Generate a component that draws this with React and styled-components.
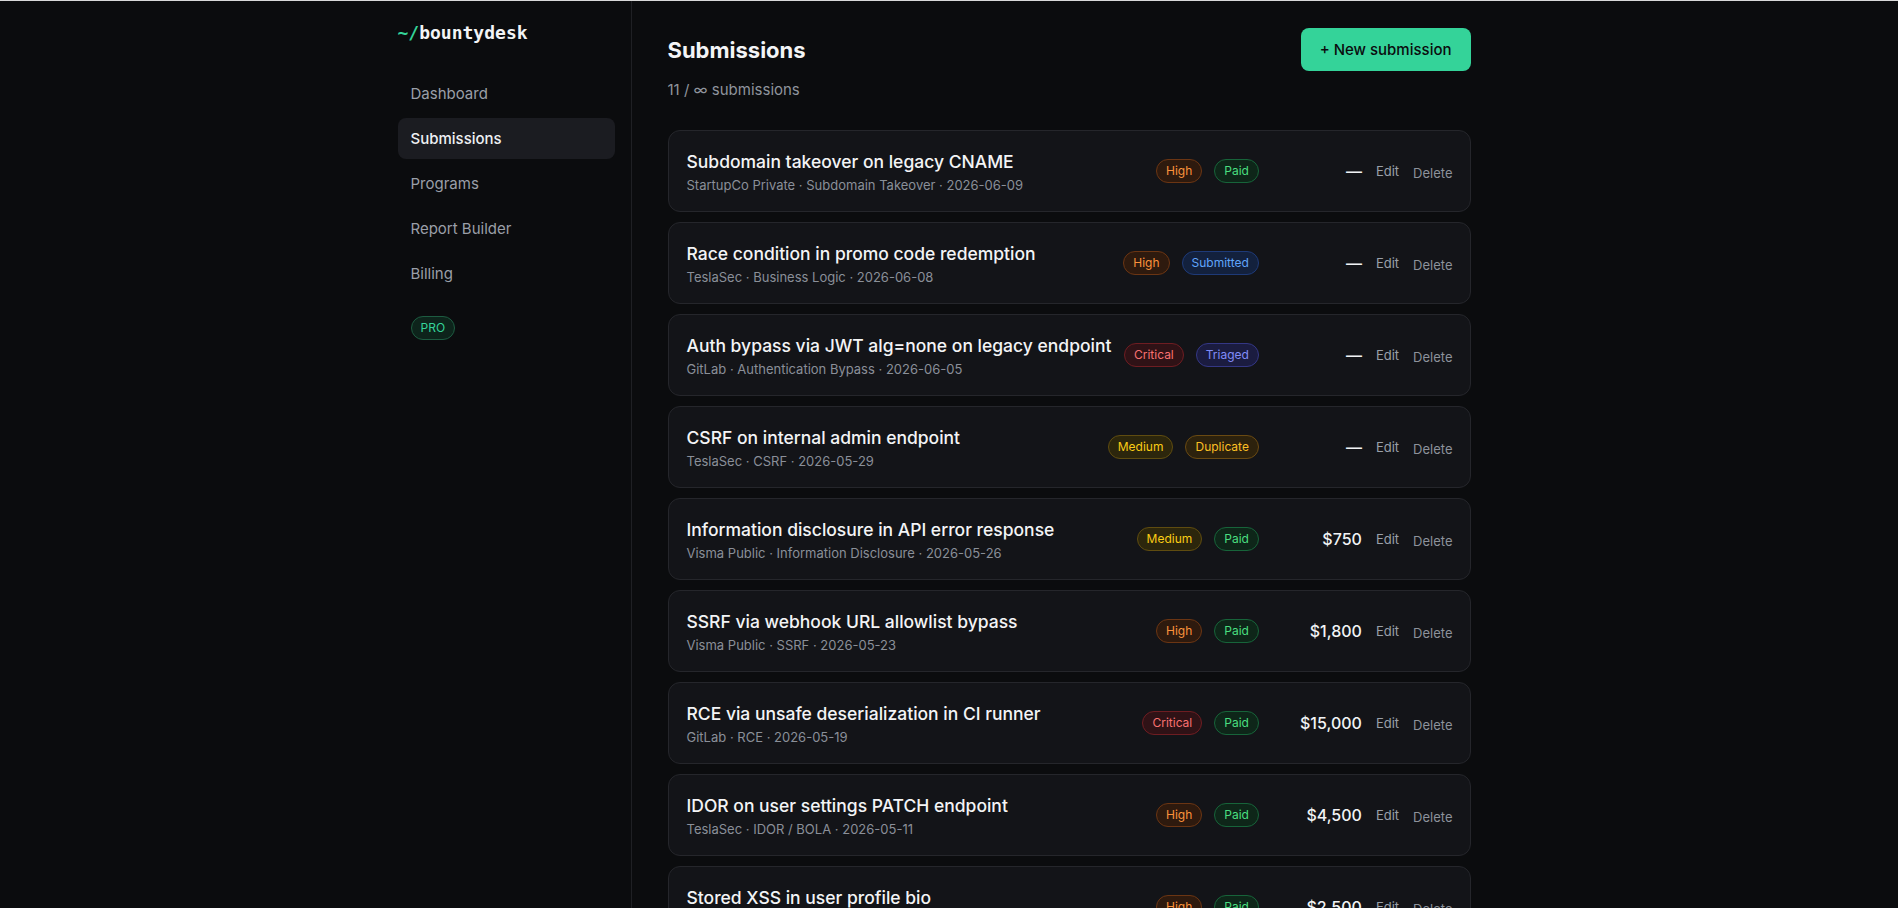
import React from "react";
import styled, { createGlobalStyle } from "styled-components";

const GlobalStyle = createGlobalStyle`
  * { box-sizing: border-box; }
  html, body {
    margin: 0;
    padding: 0;
    background: #0b0c0e;
  }
  body {
    border-top: 1px solid #d9d9d9;
    padding-right: 15px;
    font-family: Inter, "Noto Sans", "Liberation Sans", sans-serif;
    color: #e8eaed;
    -webkit-font-smoothing: antialiased;
  }
`;

const submissions = [
  { title: "Subdomain takeover on legacy CNAME", program: "StartupCo Private", type: "Subdomain Takeover", date: "2026-06-09", severity: "High", status: "Paid", amount: null },
  { title: "Race condition in promo code redemption", program: "TeslaSec", type: "Business Logic", date: "2026-06-08", severity: "High", status: "Submitted", amount: null },
  { title: "Auth bypass via JWT alg=none on legacy endpoint", program: "GitLab", type: "Authentication Bypass", date: "2026-06-05", severity: "Critical", status: "Triaged", amount: null },
  { title: "CSRF on internal admin endpoint", program: "TeslaSec", type: "CSRF", date: "2026-05-29", severity: "Medium", status: "Duplicate", amount: null },
  { title: "Information disclosure in API error response", program: "Visma Public", type: "Information Disclosure", date: "2026-05-26", severity: "Medium", status: "Paid", amount: "$750" },
  { title: "SSRF via webhook URL allowlist bypass", program: "Visma Public", type: "SSRF", date: "2026-05-23", severity: "High", status: "Paid", amount: "$1,800" },
  { title: "RCE via unsafe deserialization in CI runner", program: "GitLab", type: "RCE", date: "2026-05-19", severity: "Critical", status: "Paid", amount: "$15,000" },
  { title: "IDOR on user settings PATCH endpoint", program: "TeslaSec", type: "IDOR / BOLA", date: "2026-05-11", severity: "High", status: "Paid", amount: "$4,500" },
  { title: "Stored XSS in user profile bio", program: "StartupCo Private", type: "XSS", date: "2026-05-04", severity: "High", status: "Paid", amount: "$2,500" },
  { title: "Open redirect in OAuth callback", program: "Visma Public", type: "Open Redirect", date: "2026-04-27", severity: "Low", status: "Informative", amount: null },
  { title: "SQL injection in report export filter", program: "GitLab", type: "SQL Injection", date: "2026-04-18", severity: "Critical", status: "Paid", amount: "$8,000" },
];

// badge colours: text / background / border
const tones = {
  High: ["#fb923c", "#2e1a0e", "#6b3513"],
  Critical: ["#f87171", "#2f1216", "#6e1d22"],
  Medium: ["#facc15", "#2c260c", "#5f4c10"],
  Low: ["#94a3b8", "#1a1d23", "#343a45"],
  Paid: ["#4ade80", "#0e2619", "#17643a"],
  Submitted: ["#60a5fa", "#13213d", "#1e3a78"],
  Triaged: ["#818cf8", "#1b1c40", "#343785"],
  Duplicate: ["#fbbf24", "#2d220d", "#6a4a12"],
  Informative: ["#94a3b8", "#1a1d23", "#343a45"],
};

const Shell = styled.div`
  display: flex;
  width: 1120px;
  margin: 0 auto;
  min-height: 100vh;
`;

const Sidebar = styled.aside`
  width: 250px;
  flex-shrink: 0;
  position: sticky;
  top: 0;
  height: 100vh;
  padding: 21px 16px 0 16px;
  border-right: 1px solid #1f2024;
`;

const Logo = styled.div`
  font-family: "DejaVu Sans Mono", "Liberation Mono", monospace;
  font-weight: 700;
  font-size: 18px;
  line-height: 22px;
  color: #f3f4f6;
  margin-bottom: 29px;
  span { color: #34d399; }
`;

const Nav = styled.nav`
  display: flex;
  flex-direction: column;
  gap: 4px;
`;

const NavItem = styled.a`
  display: block;
  height: 41px;
  line-height: 41px;
  padding: 0 12px 0 13px;
  border-radius: 8px;
  font-size: 15px;
  text-decoration: none;
  color: ${(p) => (p.$active ? "#eef0f3" : "#9a9fa8")};
  background: ${(p) => (p.$active ? "#1b1c21" : "transparent")};
  font-weight: ${(p) => (p.$active ? 500 : 400)};
`;

const Pro = styled.span`
  display: inline-block;
  margin: 22px 0 0 13px;
  padding: 3px 9px;
  border-radius: 999px;
  font-size: 12px;
  line-height: 16px;
  color: #34d399;
  background: #0d241b;
  border: 1px solid #1d5c41;
`;

const Main = styled.main`
  flex: 1;
  padding: 27px 31px 40px 36px;
`;

const Header = styled.header`
  display: flex;
  justify-content: space-between;
  align-items: flex-start;
  margin-bottom: 31px;
`;

const Title = styled.h1`
  margin: 8px 0 0;
  font-size: 22px;
  line-height: 28px;
  font-weight: 700;
  color: #f3f4f6;
`;

const Count = styled.div`
  margin-top: 17px;
  font-size: 15px;
  line-height: 18px;
  color: #8f949d;
`;

const PrimaryButton = styled.button`
  height: 43px;
  padding: 0 19px;
  border: none;
  border-radius: 8px;
  background: #34d399;
  color: #0b0c0e;
  font-family: inherit;
  font-size: 15px;
  font-weight: 500;
`;

const List = styled.div`
  display: flex;
  flex-direction: column;
  gap: 10px;
`;

const Card = styled.div`
  display: flex;
  align-items: center;
  padding: 17px 17px 17px 18px;
  background: #131418;
  border: 1px solid #25262b;
  border-radius: 12px;
`;

const Info = styled.div`
  flex: 1;
  min-width: 0;
  padding-top: 2px;
`;

const CardTitle = styled.div`
  font-size: 17.5px;
  line-height: 24px;
  font-weight: 500;
  color: #f3f4f6;
  white-space: nowrap;
`;

const Meta = styled.div`
  margin-top: 2px;
  font-size: 13px;
  line-height: 18px;
  color: #8a8f98;
`;

const Badges = styled.div`
  display: flex;
  gap: 12px;
  margin-left: 12px;
`;

const Badge = styled.span`
  padding: 3px 9px;
  border-radius: 999px;
  font-size: 12px;
  line-height: 16px;
  color: ${(p) => tones[p.$tone][0]};
  background: ${(p) => tones[p.$tone][1]};
  border: 1px solid ${(p) => tones[p.$tone][2]};
`;

const Amount = styled.div`
  width: 88px;
  margin-left: 15px;
  text-align: right;
  font-size: 16px;
  font-weight: 500;
  color: #f1f3f5;
`;

const Action = styled.button`
  margin-left: 14px;
  margin-top: ${(p) => (p.$danger ? "4px" : "0")};
  padding: 0;
  border: none;
  background: none;
  font-family: inherit;
  font-size: 13px;
  line-height: 18px;
  color: ${(p) => (p.$danger ? "#8d929b" : "#9aa0a9")};
`;

const navItems = ["Dashboard", "Submissions", "Programs", "Report Builder", "Billing"];

export default function App() {
  return (
    <>
      <GlobalStyle />
      <Shell>
        <Sidebar>
          <Logo><span>~/</span>bountydesk</Logo>
          <Nav>
            {navItems.map((n) => (
              <NavItem key={n} href="#" $active={n === "Submissions"}>{n}</NavItem>
            ))}
          </Nav>
          <Pro>PRO</Pro>
        </Sidebar>
        <Main>
          <Header>
            <div>
              <Title>Submissions</Title>
              <Count>11 / ∞ submissions</Count>
            </div>
            <PrimaryButton type="button">+ New submission</PrimaryButton>
          </Header>
          <List>
            {submissions.map((s, i) => (
              <Card key={i}>
                <Info>
                  <CardTitle>{s.title}</CardTitle>
                  <Meta>{s.program} · {s.type} · {s.date}</Meta>
                </Info>
                <Badges>
                  <Badge $tone={s.severity}>{s.severity}</Badge>
                  <Badge $tone={s.status}>{s.status}</Badge>
                </Badges>
                <Amount>{s.amount || "—"}</Amount>
                <Action type="button">Edit</Action>
                <Action type="button" $danger>Delete</Action>
              </Card>
            ))}
          </List>
        </Main>
      </Shell>
    </>
  );
}
